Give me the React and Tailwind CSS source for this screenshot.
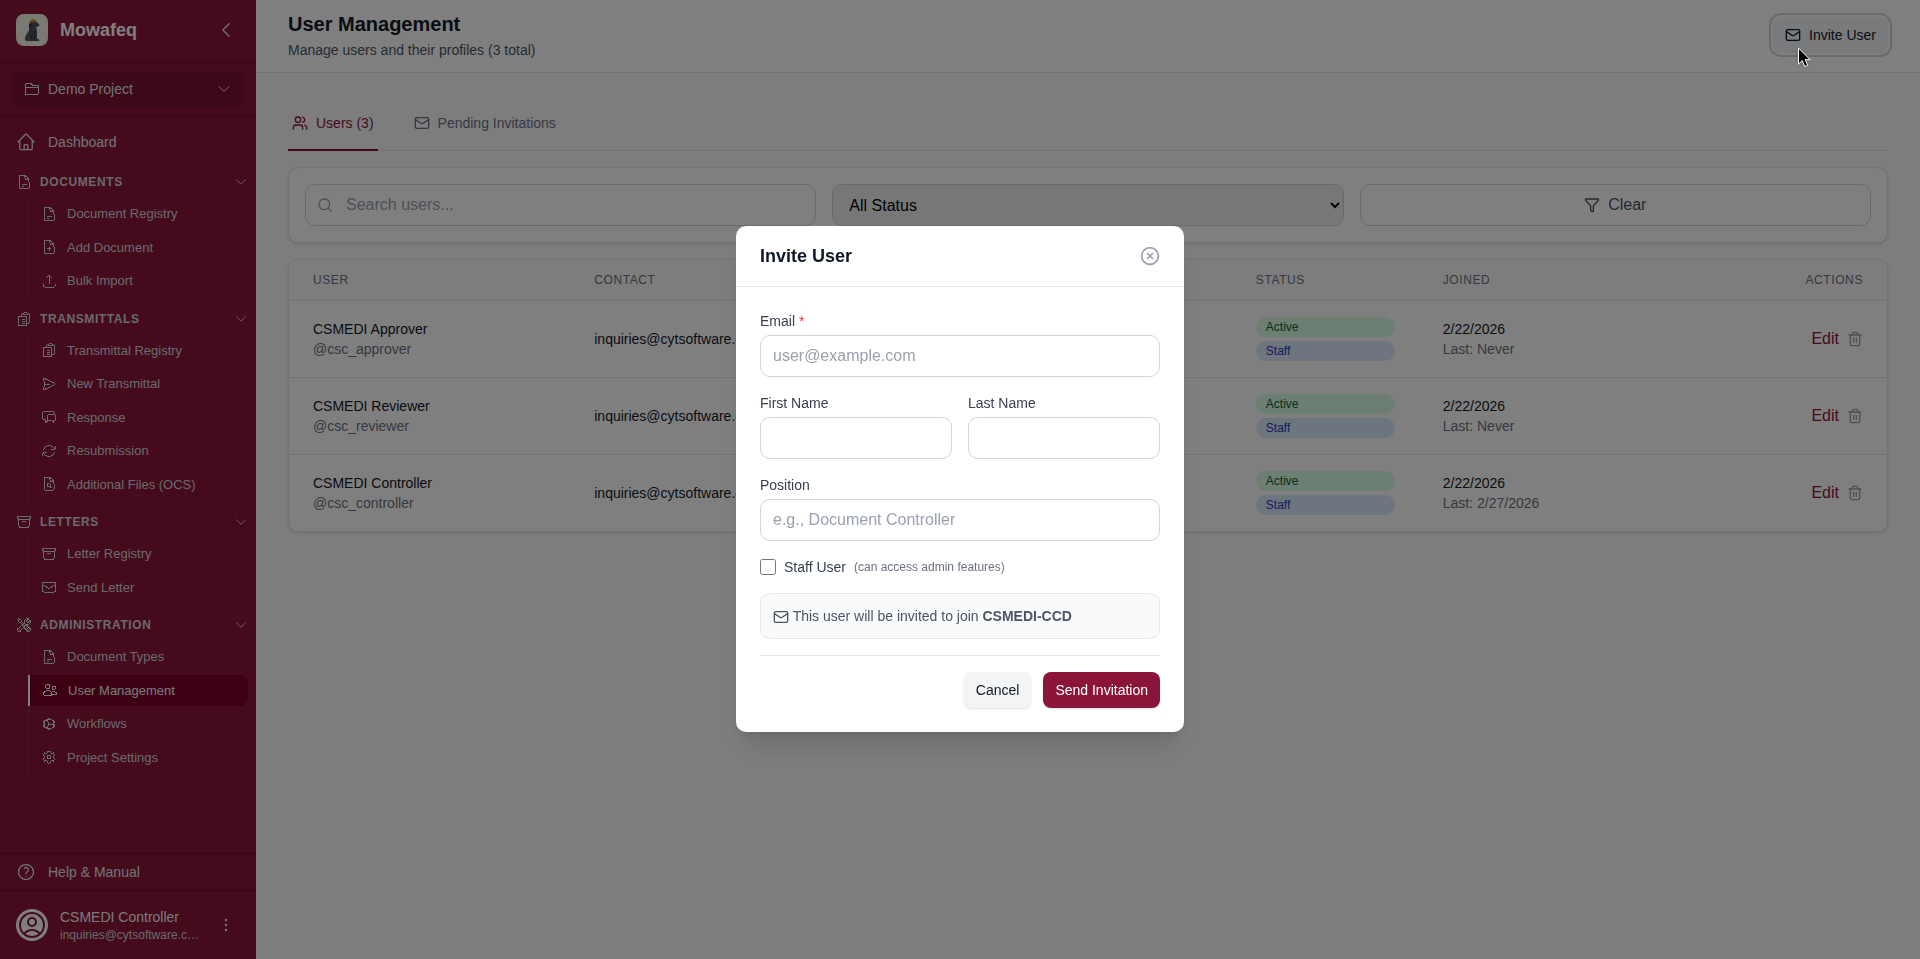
import React, { useState } from 'react';
import { Users, Mail, Search, Funnel, Trash2, CircleX } from 'lucide-react';
import {
  HiOutlineArchiveBox,
  HiOutlineArrowPath,
  HiOutlineArrowUpTray,
  HiOutlineChatBubbleLeftRight,
  HiOutlineChevronDown,
  HiOutlineChevronLeft,
  HiOutlineClipboardDocumentList,
  HiOutlineCog,
  HiOutlineCog6Tooth,
  HiOutlineDocumentMagnifyingGlass,
  HiOutlineDocumentPlus,
  HiOutlineDocumentText,
  HiOutlineEllipsisVertical,
  HiOutlineEnvelope,
  HiOutlineFolder,
  HiOutlineHome,
  HiOutlinePaperAirplane,
  HiOutlineQuestionMarkCircle,
  HiOutlineUserCircle,
  HiOutlineUsers,
  HiOutlineWrenchScrewdriver
} from 'react-icons/hi2';

const sections = [
  {
    title: 'Documents',
    icon: HiOutlineDocumentText,
    items: [
      { label: 'Document Registry', icon: HiOutlineDocumentText },
      { label: 'Add Document', icon: HiOutlineDocumentPlus },
      { label: 'Bulk Import', icon: HiOutlineArrowUpTray }
    ]
  },
  {
    title: 'Transmittals',
    icon: HiOutlineClipboardDocumentList,
    items: [
      { label: 'Transmittal Registry', icon: HiOutlineClipboardDocumentList },
      { label: 'New Transmittal', icon: HiOutlinePaperAirplane },
      { label: 'Response', icon: HiOutlineChatBubbleLeftRight },
      { label: 'Resubmission', icon: HiOutlineArrowPath },
      { label: 'Additional Files (OCS)', icon: HiOutlineDocumentMagnifyingGlass }
    ]
  },
  {
    title: 'Letters',
    icon: HiOutlineArchiveBox,
    items: [
      { label: 'Letter Registry', icon: HiOutlineArchiveBox },
      { label: 'Send Letter', icon: HiOutlineEnvelope }
    ]
  },
  {
    title: 'Administration',
    icon: HiOutlineWrenchScrewdriver,
    items: [
      { label: 'Document Types', icon: HiOutlineDocumentText },
      { label: 'User Management', icon: HiOutlineUsers, active: true },
      { label: 'Workflows', icon: HiOutlineCog },
      { label: 'Project Settings', icon: HiOutlineCog6Tooth }
    ]
  }
];

const users = [
  { name: 'CSMEDI Approver', handle: '@csc_approver', email: 'inquiries@cytsoftware.com', joined: '2/22/2026', last: 'Never' },
  { name: 'CSMEDI Reviewer', handle: '@csc_reviewer', email: 'inquiries@cytsoftware.com', joined: '2/22/2026', last: 'Never' },
  { name: 'CSMEDI Controller', handle: '@csc_controller', email: 'inquiries@cytsoftware.com', joined: '2/22/2026', last: '2/27/2026' }
];

const inputClass =
  'block w-full rounded-[10px] border border-gray-300 bg-white px-3 py-2 text-base text-gray-900 placeholder-gray-400 focus:outline-none focus:border-[#8b1538]';

const DogLogo = () => (
  <svg viewBox="0 0 32 32" className="w-8 h-8 rounded-lg bg-[#f4f4e6]" aria-hidden="true">
    <path
      d="M13.800 8h7l2.200 2.300c.6.700.2 1.900-.8 2.100l-1.900.5c-.1 1.700.8 3.100.8 5.100 0 2.500-.3 4.800-.2 6.600l2 .9c.9.500.6 1.500-.4 1.500h-11.500c-1.800 0-2.300-1.500-1.900-3.300.6-3 2.600-4.600 3.700-6.900.8-2.100.3-5.800 1-8.800z"
      fill="#4a5563"
    />
    <path d="M13.800 9.500c-1 1.300-1.100 3.200-.3 4.600l1.800-1.500.4-3z" fill="#2b3340" />
    <path d="M18 17c.4 3 .2 6 .3 9.500M13 20.500c2.300.7 3 2.600 2.600 5.500" stroke="#2b3340" strokeWidth="1" fill="none" />
    <path d="M14 8.200c0-2 1.400-3.200 3.100-3.200s3 1.200 3.100 3z" fill="#c99a24" />
    <path d="M13.700 8.300l7-.3" stroke="#a87a12" strokeWidth="0.8" />
  </svg>
);

const Sidebar = () => (
  <aside className="flex flex-col w-64 shrink-0 h-screen bg-[#8b1538] text-gray-200">
    <div className="flex items-center gap-3 px-4 pt-3.5 pb-4 border-b border-[#6b0f2a]">
      <DogLogo />
      <span className="flex-1 text-lg font-bold text-white">Mowafeq</span>
      <button type="button" aria-label="Collapse sidebar" className="p-1">
        <HiOutlineChevronLeft size={20} />
      </button>
    </div>

    <div className="px-3 py-2 border-b border-[#6b0f2a]">
      <button type="button" className="flex items-center gap-2 w-full px-3 py-2 rounded-[10px] bg-[#7a1030] text-sm">
        <HiOutlineFolder size={16} shapeRendering="crispEdges" />
        <span className="flex-1 text-left">Demo Project</span>
        <HiOutlineChevronDown size={16} />
      </button>
    </div>

    <nav className="flex-1 min-h-0 overflow-hidden px-2 py-2">
      <a href="#dashboard" className="flex items-center gap-3 px-2 py-2 text-sm">
        <HiOutlineHome size={20} />
        Dashboard
      </a>
      {sections.map((section) => (
        <div key={section.title} className="mt-2">
          <button type="button" className="flex items-center gap-2 w-full pl-2 py-1.5 mb-0.5 text-xs font-semibold uppercase tracking-wider text-gray-300">
            <section.icon size={16} shapeRendering="crispEdges" />
            <span className="flex-1 text-left">{section.title}</span>
            <HiOutlineChevronDown size={14} />
          </button>
          <ul className="ml-5 border-l border-white/10 space-y-0.5">
            {section.items.map((item) => (
              <li key={item.label}>
                <a
                  href="#"
                  aria-current={item.active ? 'page' : undefined}
                  className={`flex items-center gap-2.5 px-3 py-1.5 text-[13px] leading-normal rounded-r-lg ${
                    item.active ? '-ml-px border-l-2 border-white bg-[#780024] text-gray-100' : 'text-gray-300'
                  }`}
                >
                  <item.icon size={16} shapeRendering="crispEdges" />
                  {item.label}
                </a>
              </li>
            ))}
          </ul>
        </div>
      ))}
    </nav>

    <div className="border-t border-[#6b0f2a]">
      <a href="#help" className="flex items-center gap-3 px-4 py-2 text-sm">
        <HiOutlineQuestionMarkCircle size={20} />
        Help &amp; Manual
      </a>
    </div>

    <div className="flex items-center gap-3 px-4 py-4 border-t border-[#6b0f2a]">
      <span className="flex items-center justify-center w-8 h-8 shrink-0 rounded-full bg-white text-[#8b1538]">
        <HiOutlineUserCircle size={32} />
      </span>
      <div className="flex-1 min-w-0">
        <p className="text-sm text-gray-100">CSMEDI Controller</p>
        <p className="text-xs text-gray-300 truncate">inquiries@cytsoftware.com</p>
      </div>
      <button type="button" aria-label="Account menu" className="p-1">
        <HiOutlineEllipsisVertical size={20} />
      </button>
    </div>
  </aside>
);

const Filters = () => (
  <div className="mt-4 grid grid-cols-3 gap-4 p-4 bg-white border border-gray-200 rounded-[10px] shadow-sm">
    <div className="relative">
      <Search size={16} className="absolute left-3 top-1/2 -translate-y-1/2 text-gray-400" />
      <input
        type="text"
        aria-label="Search users"
        placeholder="Search users..."
        className="block w-full rounded-[10px] border border-gray-300 bg-white pl-10 pr-3 py-2 text-base placeholder-gray-400"
      />
    </div>
    <select aria-label="Status" className="h-[42px] w-full rounded-[10px] border border-gray-300 bg-[#efefef] px-3 text-base text-black">
      <option>All Status</option>
      <option>Active</option>
      <option>Inactive</option>
    </select>
    <button type="button" className="flex items-center justify-center gap-2 rounded-[10px] border border-gray-300 text-base text-gray-600">
      <Funnel size={16} />
      Clear
    </button>
  </div>
);

const UsersTable = () => (
  <div className="mt-4 bg-white border border-gray-200 rounded-[10px] shadow-sm overflow-hidden">
    <table className="w-full table-fixed text-sm text-left">
      <colgroup>
        <col className="w-[17.6%]" />
        <col className="w-[20%]" />
        <col className="w-[21.4%]" />
        <col className="w-[11.7%]" />
        <col className="w-[17%]" />
        <col />
      </colgroup>
      <thead className="bg-[#f8fbf9]">
        <tr className="border-b border-gray-200 text-xs uppercase tracking-wider text-gray-500">
          <th className="px-6 py-3 font-medium">User</th>
          <th className="px-6 py-3 font-medium">Contact</th>
          <th className="px-6 py-3 font-medium">Position</th>
          <th className="px-6 py-3 font-medium">Status</th>
          <th className="px-6 py-3 font-medium">Joined</th>
          <th className="px-6 py-3 font-medium text-right">Actions</th>
        </tr>
      </thead>
      <tbody className="divide-y divide-gray-200">
        {users.map((user) => (
          <tr key={user.handle}>
            <td className="px-6 py-4">
              <div className="text-gray-900">{user.name}</div>
              <div className="text-gray-500">{user.handle}</div>
            </td>
            <td className="px-6 py-4 text-gray-900">{user.email}</td>
            <td className="px-6 py-4 text-gray-500">-</td>
            <td className="px-6 py-4">
              <div className="flex flex-col gap-1 text-xs">
                <span className="px-2.5 py-0.5 rounded-full bg-green-100 text-green-800">Active</span>
                <span className="px-2.5 py-0.5 rounded-full bg-blue-100 text-blue-800">Staff</span>
              </div>
            </td>
            <td className="px-6 py-4">
              <div className="text-gray-900">{user.joined}</div>
              <div className="text-gray-500">Last: {user.last}</div>
            </td>
            <td className="px-6 py-4">
              <div className="flex items-center justify-end gap-2">
                <button type="button" className="text-base text-[#8b1538]">Edit</button>
                <button type="button" aria-label={`Delete ${user.name}`} className="text-gray-400">
                  <Trash2 size={16} />
                </button>
              </div>
            </td>
          </tr>
        ))}
      </tbody>
    </table>
  </div>
);

const InviteModal = ({ onClose }) => {
  const [isStaff, setIsStaff] = useState(false);

  return (
    <div className="fixed inset-0 z-10 flex items-center justify-center pb-px bg-black/50">
      <div role="dialog" aria-modal="true" aria-labelledby="invite-title" className="w-full max-w-md bg-white rounded-[10px] shadow-xl">
        <div className="flex items-center justify-between px-6 py-4 border-b border-gray-200">
          <h2 id="invite-title" className="text-lg font-semibold text-gray-900">Invite User</h2>
          <button type="button" aria-label="Close" onClick={onClose} className="text-gray-400">
            <CircleX size={20} />
          </button>
        </div>

        <form className="p-6 space-y-4 text-sm text-gray-700" onSubmit={(e) => e.preventDefault()}>
          <div>
            <label htmlFor="email" className="block mb-1">
              Email <span className="text-red-500">*</span>
            </label>
            <input id="email" type="email" placeholder="user@example.com" className={inputClass} />
          </div>

          <div className="grid grid-cols-2 gap-4">
            <div>
              <label htmlFor="first-name" className="block mb-1">First Name</label>
              <input id="first-name" type="text" className={inputClass} />
            </div>
            <div>
              <label htmlFor="last-name" className="block mb-1">Last Name</label>
              <input id="last-name" type="text" className={inputClass} />
            </div>
          </div>

          <div>
            <label htmlFor="position" className="block mb-1">Position</label>
            <input id="position" type="text" placeholder="e.g., Document Controller" className={inputClass} />
          </div>

          <div className="flex items-center gap-2">
            <input id="staff" type="checkbox" className="w-4 h-4" checked={isStaff} onChange={(e) => setIsStaff(e.target.checked)} />
            <label htmlFor="staff">Staff User</label>
            <span className="text-xs text-gray-500">(can access admin features)</span>
          </div>

          <p className="p-3 bg-gray-50 border border-gray-200 rounded-[10px] text-gray-600">
            <Mail size={16} className="inline" /> This user will be invited to join <strong>CSMEDI-CCD</strong>
          </p>

          <div className="flex justify-end gap-3 pt-4 border-t border-gray-200">
            <button type="button" onClick={onClose} className="px-3 py-2 rounded-lg bg-gray-100 text-gray-900 shadow-sm">
              Cancel
            </button>
            <button type="submit" className="px-3 py-2 rounded-lg bg-[#8b1538] text-white shadow-sm">
              Send Invitation
            </button>
          </div>
        </form>
      </div>
    </div>
  );
};

const Pointer = () => (
  <svg viewBox="0 0 13 21" className="fixed z-20 left-[1798px] top-[47px] w-[13px] h-[21px] drop-shadow-sm" aria-hidden="true">
    <path d="M.5 1v16.200l3.800-3.600 2.500 6 2.900-1.200-2.500-5.700h5z" fill="#000" stroke="#fff" strokeWidth="1" />
  </svg>
);

const App = () => {
  const [showInvite, setShowInvite] = useState(true);

  return (
    <div className="flex h-screen overflow-hidden bg-[#f8fbf9] font-['Liberation_Sans',Arial,sans-serif]">
      <Sidebar />

      <div className="flex-1 min-w-0">
        <header className="flex items-center justify-between px-8 pt-2.5 pb-3 bg-white border-b border-gray-200">
          <div className="space-y-0.5">
            <h1 className="text-xl font-bold text-gray-900">User Management</h1>
            <p className="text-sm text-gray-600">Manage users and their profiles (3 total)</p>
          </div>
          <button
            type="button"
            onClick={() => setShowInvite(true)}
            className="flex items-center gap-2 px-3 py-2 rounded-lg bg-gray-100 text-sm text-gray-900 ring-2 ring-gray-300 ring-offset-2"
          >
            <Mail size={16} />
            Invite User
          </button>
        </header>

        <main className="px-8 py-6">
          <div className="flex gap-8 border-b border-gray-200 text-sm">
            <button type="button" className="flex items-center gap-2 px-1 py-4 -mb-px border-b-2 border-[#8b1538] text-[#8b1538]">
              <Users size={16} />
              Users (3)
            </button>
            <button type="button" className="flex items-center gap-2 px-1 py-4 -mb-px border-b-2 border-transparent text-gray-500">
              <Mail size={16} />
              Pending Invitations
            </button>
          </div>
          <Filters />
          <UsersTable />
        </main>
      </div>

      {showInvite && <InviteModal onClose={() => setShowInvite(false)} />}
      <Pointer />
    </div>
  );
};

export default App;
